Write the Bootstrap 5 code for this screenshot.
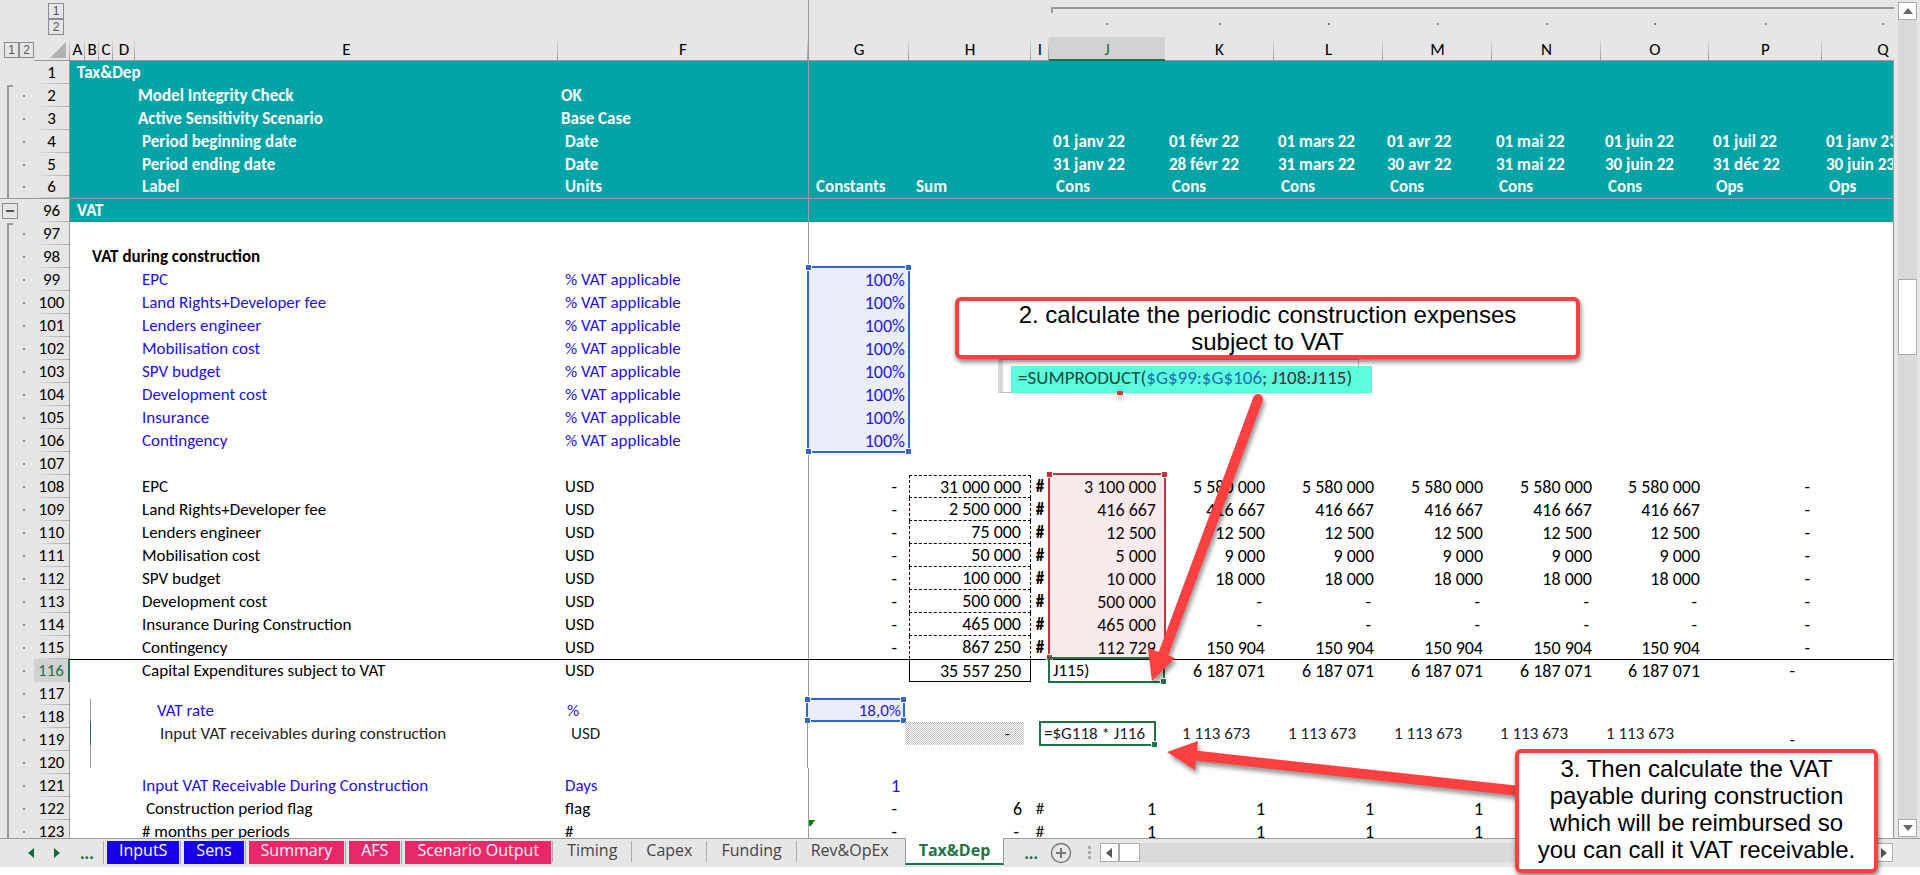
<!DOCTYPE html>
<html lang="en">
<head>
<meta charset="utf-8">
<meta name="viewport" content="width=device-width, initial-scale=1">
<title>Tax&amp;Dep</title>
<link href="https://cdn.jsdelivr.net/npm/bootstrap@5.3.0/dist/css/bootstrap.min.css" rel="stylesheet">
<style>
  :root { --chrome:#e6e6e6; --rule:#9b9b9b; --teal:#00a3a6; --xl:#217346; --entry:#1f0fe0; --alert:#ff4040; --pick:#3366cc; --pickred:#c0343f; }
  body { font-family: Calibri, Carlito, Lato, sans-serif; font-size: 17px; line-height: 20px; color: #000; background: #fff; }
  .app { padding-bottom: 8px; }
  .app button { border-radius: 0; padding: 0; line-height: 1; }

  /* grid */
  .sheet { background: #fff; min-width: 0; }
  .sheet::after { content: ""; position: absolute; right: 0; top: 60px; bottom: 0; border-right: 1px solid var(--rule); }
  .cells { table-layout: fixed; width: 1944px; border-collapse: separate; border-spacing: 0; white-space: nowrap; }
  .cells td, .cells th { height: 23px; padding: 0 9px 0 7px; vertical-align: middle; }
  .cells th { font-weight: 400; }
  col.c-gut { width: 34px; } col.c-num { width: 36px; } col.c-a { width: 15px; } col.c-b { width: 14px; } col.c-d { width: 22px; }
  col.c-e { width: 423px; } col.c-f { width: 251px; } col.c-g { width: 100px; } col.c-h { width: 122px; } col.c-i { width: 18px; }
  col.c-j { width: 116px; } col.c-k { width: 109px; } col.c-o { width: 108px; } col.c-p { width: 113px; } col.c-q { width: 122px; }

  .cells thead { background: var(--chrome); }
  .cells thead .levels th { height: 37px; padding: 0; }
  .cells thead .levels th.in { background: linear-gradient(var(--rule),var(--rule)) 0 7px/100% 2px no-repeat, linear-gradient(#888,#888) center 23px/2px 2px no-repeat; }
  .cells thead .levels th.first { background: linear-gradient(var(--rule),var(--rule)) 2px 7px/100% 2px no-repeat, linear-gradient(var(--rule),var(--rule)) 2px 7px/2px 6px no-repeat, linear-gradient(#888,#888) center 23px/2px 2px no-repeat; }
  .cells thead .letters th { height: 24px; padding: 3px 0 0; line-height: 18px; text-align: center; border-bottom: 1px solid var(--rule); background: linear-gradient(#e6e6e6,#999) right 0 top 0/1px 100% no-repeat; }
  .cells thead .letters th.plain { background: none; border-bottom-color: var(--chrome); }
  .cells thead .letters th.on { background: #d2d2d2; color: var(--xl); border-bottom: 2px solid var(--xl); }
  .lvl { width: 16px; height: 16px; border: 1px solid #8a8a98; background: transparent; color: #555; font-family: "Liberation Sans", sans-serif; font-size: 12px; display: block; }

  .cells tbody td.gut { padding: 0 0 0 2px; background-color: var(--chrome); background-repeat: no-repeat; }
  .cells tbody td.br { background-image: linear-gradient(var(--rule),var(--rule)), linear-gradient(#888,#888); background-position: 7px 0, 23px center; background-size: 2px 100%, 2px 2px; }
  .cells tbody td.br.start { background-image: linear-gradient(var(--rule),var(--rule)), linear-gradient(var(--rule),var(--rule)), linear-gradient(#888,#888); background-position: 7px 1px, 7px 1px, 23px center; background-size: 2px 100%, 6px 2px, 2px 2px; }
  .cells tbody th { padding: 0; text-align: center; background: linear-gradient(90deg,#e6e6e6,#aaa) left bottom/100% 1px no-repeat var(--chrome); border-right: 1px solid var(--rule); }
  .cells tbody th.on { background: #d2d2d2; color: var(--xl); border-right: 2px solid var(--xl); }
  .cells td.f { border-right: 1px solid var(--rule); }
  .cells thead th.fz { border-right: 1px solid var(--rule); }
  .cells tr.head td { color: #fff; font-weight: 700; }
  .cells tr.head td:not(.gut) { background: var(--teal); }
  .cells tr.cut > * { border-bottom: 1px solid var(--rule); }
  .cells td.t3 { padding-left: 3px; }
  .cells td.t11 { padding-left: 11px; }
  .cells td.t4 { padding-left: 4px; }
  .num td:nth-child(n+6) { text-align: right; font-size: 18px; }
  .num td:nth-child(n+6).txt { text-align: left; font-size: 17px; }
  .cells td.pct { padding-right: 4px; }
  .cells td.dash { padding-right: 12px; }
  .cells td.dash27 { padding-right: 27px; }
  .cells td.hash { padding: 0; text-align: center !important; font-size: 17px !important; }
  .boxed td.hash { font-weight: 700; }
  .entry td { color: var(--entry); }
  .cells td.box { border: 1px dashed #000; border-top: 0; }
  .cells tr:not(.boxed) + tr.boxed td.box { border-top: 1px dashed #000; }
  .cells td.total { border: 1px solid #000; }
  .cells td.last { border-bottom-color: transparent; }
  .cells tr.sum td:not(.gut) { border-top: 1px solid #000; }
  .cells td.flag { background: linear-gradient(to bottom right, #0a7d0a 50%, transparent 50%) 0 0/7px 7px no-repeat; }

  /* range outlines that lie over the cells */
  .range { position: absolute; border: 2px solid; pointer-events: none; }
  .range i { position: absolute; border: 1px solid #fff; background: currentColor; box-sizing: content-box; width: 5px; height: 5px; }
  .range .nw { left: -4px; top: -4px; } .range .ne { right: -4px; top: -4px; } .range .sw { left: -4px; bottom: -4px; } .range .se { right: -4px; bottom: -4px; }
  .r-blue { color: var(--pick); background: rgba(51,102,204,.11); }
  .r-red { color: var(--pickred); background: rgba(200,50,60,.10); }
  .r-green { color: var(--xl); }
  .r-pct { left: 807px; top: 266px; width: 103px; height: 187px; }
  .r-capex { left: 1048px; top: 473px; width: 118px; height: 186px; }
  .r-active { left: 1048px; top: 657px; width: 117px; height: 26px; }

  /* pasted strip with the VAT lines */
  .strip { position: absolute; left: 90px; top: 699px; background: #fff; }
  .strip table { table-layout: fixed; width: 1593px; border-collapse: separate; border-spacing: 0; white-space: nowrap; color: #222; }
  .strip td { height: 23px; padding: 0 9px 0 0; text-align: right; position: relative; }
  .strip td.nm { text-align: left; padding-left: 66px; border-left: 1px solid var(--rule); }
  .strip tr.calc td.nm { padding-left: 69px; border-left-color: var(--xl); }
  .strip td.un { text-align: left; padding-left: 4px; border-right: 1px solid var(--rule); }
  .strip tr.calc td.un { padding-left: 8px; }
  .strip td.hatch { background: repeating-conic-gradient(#c2c2c2 0 25%, #fff 0 50%) 0 0/2px 2px; padding-right: 14px; }
  .strip td.edit { text-align: left; padding-left: 4px; }
  .strip .range { inset: -1px -1px -1px -1px; }
  .strip .rate { padding-right: 4px; }
  .strip .r-rate { inset: -1px 0 0 -2px; }

  /* notes */
  .note { position: absolute; border: 4px solid var(--alert); border-radius: 6px; background: #fff; text-align: center; font-family: "Liberation Sans", Arial, sans-serif; font-size: 24px; line-height: 27px; box-shadow: 1px 3px 5px rgba(0,0,0,.5); }
  .n-two { left: 955px; top: 297px; width: 625px; height: 62px; }
  .n-three { left: 1515px; top: 749px; width: 363px; height: 124px; padding-top: 2px; }
  .formula { position: absolute; left: 998px; top: 359px; width: 361px; height: 34px; border: 1px solid #bbb; border-left: 5px solid #d8d8d8; padding: 6px 0 0 8px; background: #fff; }
  .formula span { display: block; width: 361px; height: 27px; padding-left: 7px; background: #5bffdd; font-size: 19px; line-height: 24px; white-space: nowrap; color: #14483c; }
  .formula b { font-weight: 400; color: #1c6fb4; } .formula em { font-style: normal; color: #4a2a30; }
  .speck { position: absolute; left: 1117px; top: 391px; width: 6px; height: 4px; background: #d23a3a; box-shadow: 0 4px 4px rgba(0,0,0,.3); }
  .arrows { position: absolute; left: 0; top: 0; width: 1600px; height: 838px; pointer-events: none; filter: drop-shadow(2px 4px 2px rgba(0,0,0,.4)); }

  /* scroll bars */
  .vbar { width: 26px; background: var(--chrome); padding: 2px 3px 1px 4px; }
  .sq { border: 1px solid #ababab; background: #fff; display: flex; align-items: center; justify-content: center; }
  .vbar .sq { height: 18px; }
  .vtrack { background: #dadada; }
  .vthumb { height: 76px; margin-top: 259px; border: 1px solid #ababab; background: #fff; }

  /* sheet tabs */
  .tabbar { height: 29px; background: var(--chrome); border-top: 1px solid var(--rule); font-family: "Open Sans", "Noto Sans", sans-serif; font-size: 16px; line-height: 20px; }
  .tabbar a { color: #444; text-decoration: none; display: block; white-space: nowrap; }
  .tabbar .plain { padding: 0 14px; border-left: 1px solid #aaa; height: 21px; margin-top: 2px; }
  .tabbar .tinted { padding-left: 3px; border-left: 1px solid #aaa; height: 23px; margin: 2px 1px 0 0; }
  .tabbar .tinted a { color: #fff; padding: 0 12px; height: 23px; line-height: 18px; }
  .tabbar .bl a { background: #1700e8; } .tabbar .pk a { background: #e8286b; }
  .tabbar .plain a { line-height: 18px; }
  .tabbar .cur { background: #fff; border: 1px solid var(--rule); border-top: 0; border-bottom: 2px solid var(--xl); margin: -1px 0 0 2px; height: 27px; padding: 2px 13px 0; }
  .tabbar .cur a { color: var(--xl); font-weight: 700; }
  .tabnav { width: 103px; padding-left: 28px; gap: 20px; }
  .tabbar button { background: none; border: 0; }
  .dots3 { color: var(--xl); font-weight: 700; }
  .hbar { height: 19px; margin: 4px 27px 0 0; }
  .hbar .sq { width: 19px; height: 19px; border: 1px solid #ababab; background: #fff; }
  .hbar .htr { background: #dadada; } .hbar .hth { width: 21px; height: 19px; background: #fff; border: 1px solid #ababab; }
</style>
</head>
<body>
<div class="app vh-100 d-flex flex-column position-relative overflow-hidden">
  <div class="d-flex flex-grow-1 overflow-hidden">
    <main class="sheet flex-grow-1 position-relative overflow-hidden">
      <table class="cells">
        <colgroup><col class="c-gut"><col class="c-num"><col class="c-a"><col class="c-b"><col class="c-b"><col class="c-d"><col class="c-e"><col class="c-f"><col class="c-g"><col class="c-h"><col class="c-i"><col class="c-j"><col class="c-k"><col class="c-k"><col class="c-k"><col class="c-k"><col class="c-o"><col class="c-p"><col class="c-q"></colgroup>
        <thead>
          <tr class="levels"><th></th><th><div class="d-flex flex-column align-items-center ps-2"><button class="lvl">1</button><button class="lvl">2</button></div></th><th colspan="5"></th><th class="fz"></th><th colspan="3"></th><th class="in first"></th><th class="in"></th><th class="in"></th><th class="in"></th><th class="in"></th><th class="in"></th><th class="in"></th><th class="in"></th></tr>
          <tr class="letters"><th class="plain"><div class="d-flex ps-1"><button class="lvl">1</button><button class="lvl">2</button></div></th><th><svg width="16" height="16" viewBox="0 0 16 16" class="d-block ms-auto me-1"><path d="M16 0V16H0Z" fill="#b2b2b2"/></svg></th><th>A</th><th>B</th><th>C</th><th>D</th><th>E</th><th class="fz">F</th><th>G</th><th>H</th><th>I</th><th class="on">J</th><th>K</th><th>L</th><th>M</th><th>N</th><th>O</th><th>P</th><th>Q</th></tr>
        </thead>
        <tbody>
          <tr class="head"><td class="gut"></td><th scope="row">1</th><td colspan="5">Tax&amp;Dep</td><td class="f"></td><td colspan="11"></td></tr>
          <tr class="head"><td class="gut br start"></td><th scope="row">2</th><td colspan="4"></td><td class="t3">Model Integrity Check</td><td class="f t3">OK</td><td colspan="11"></td></tr>
          <tr class="head"><td class="gut br"></td><th scope="row">3</th><td colspan="4"></td><td class="t3">Active Sensitivity Scenario</td><td class="f t3">Base Case</td><td colspan="11"></td></tr>
          <tr class="head"><td class="gut br"></td><th scope="row">4</th><td colspan="4"></td><td>Period beginning date</td><td class="f">Date</td><td colspan="3"></td><td class="t4">01 janv 22</td><td class="t4">01 févr 22</td><td class="t4">01 mars 22</td><td class="t4">01 avr 22</td><td class="t4">01 mai 22</td><td class="t4">01 juin 22</td><td class="t4">01 juil 22</td><td class="t4">01 janv 23</td></tr>
          <tr class="head"><td class="gut br"></td><th scope="row">5</th><td colspan="4"></td><td>Period ending date</td><td class="f">Date</td><td colspan="3"></td><td class="t4">31 janv 22</td><td class="t4">28 févr 22</td><td class="t4">31 mars 22</td><td class="t4">30 avr 22</td><td class="t4">31 mai 22</td><td class="t4">30 juin 22</td><td class="t4">31 déc 22</td><td class="t4">30 juin 23</td></tr>
          <tr class="head cut"><td class="gut br"></td><th scope="row">6</th><td colspan="4"></td><td>Label</td><td class="f">Units</td><td>Constants</td><td>Sum</td><td></td><td>Cons</td><td>Cons</td><td>Cons</td><td>Cons</td><td>Cons</td><td>Cons</td><td>Ops</td><td>Ops</td></tr>
          <tr class="head"><td class="gut"><button class="lvl" aria-label="Collapse"><svg width="14" height="14" viewBox="0 0 14 14" class="d-block"><path d="M3 7H11" stroke="#555" stroke-width="2"/></svg></button></td><th scope="row">96</th><td colspan="5">VAT</td><td class="f"></td><td colspan="11"></td></tr>
          <tr><td class="gut br start"></td><th scope="row">97</th><td colspan="5"></td><td class="f"></td></tr>
          <tr><td class="gut br"></td><th scope="row">98</th><td></td><td colspan="4" class="fw-bold">VAT during construction</td><td class="f"></td></tr>
          <tr class="entry num"><td class="gut br"></td><th scope="row">99</th><td colspan="4"></td><td>EPC</td><td class="f">% VAT applicable</td><td class="pct">100%</td></tr>
          <tr class="entry num"><td class="gut br"></td><th scope="row">100</th><td colspan="4"></td><td>Land Rights+Developer fee</td><td class="f">% VAT applicable</td><td class="pct">100%</td></tr>
          <tr class="entry num"><td class="gut br"></td><th scope="row">101</th><td colspan="4"></td><td>Lenders engineer</td><td class="f">% VAT applicable</td><td class="pct">100%</td></tr>
          <tr class="entry num"><td class="gut br"></td><th scope="row">102</th><td colspan="4"></td><td>Mobilisation cost</td><td class="f">% VAT applicable</td><td class="pct">100%</td></tr>
          <tr class="entry num"><td class="gut br"></td><th scope="row">103</th><td colspan="4"></td><td>SPV budget</td><td class="f">% VAT applicable</td><td class="pct">100%</td></tr>
          <tr class="entry num"><td class="gut br"></td><th scope="row">104</th><td colspan="4"></td><td>Development cost</td><td class="f">% VAT applicable</td><td class="pct">100%</td></tr>
          <tr class="entry num"><td class="gut br"></td><th scope="row">105</th><td colspan="4"></td><td>Insurance</td><td class="f">% VAT applicable</td><td class="pct">100%</td></tr>
          <tr class="entry num"><td class="gut br"></td><th scope="row">106</th><td colspan="4"></td><td>Contingency</td><td class="f">% VAT applicable</td><td class="pct">100%</td></tr>
          <tr><td class="gut br"></td><th scope="row">107</th><td colspan="5"></td><td class="f"></td></tr>
          <tr class="num boxed"><td class="gut br"></td><th scope="row">108</th><td colspan="4"></td><td>EPC</td><td class="f">USD</td><td class="dash">-</td><td class="box">31 000 000</td><td class="hash">#</td><td>3 100 000</td><td>5 580 000</td><td>5 580 000</td><td>5 580 000</td><td>5 580 000</td><td>5 580 000</td><td class="dash">-</td></tr>
          <tr class="num boxed"><td class="gut br"></td><th scope="row">109</th><td colspan="4"></td><td>Land Rights+Developer fee</td><td class="f">USD</td><td class="dash">-</td><td class="box">2 500 000</td><td class="hash">#</td><td>416 667</td><td>416 667</td><td>416 667</td><td>416 667</td><td>416 667</td><td>416 667</td><td class="dash">-</td></tr>
          <tr class="num boxed"><td class="gut br"></td><th scope="row">110</th><td colspan="4"></td><td>Lenders engineer</td><td class="f">USD</td><td class="dash">-</td><td class="box">75 000</td><td class="hash">#</td><td>12 500</td><td>12 500</td><td>12 500</td><td>12 500</td><td>12 500</td><td>12 500</td><td class="dash">-</td></tr>
          <tr class="num boxed"><td class="gut br"></td><th scope="row">111</th><td colspan="4"></td><td>Mobilisation cost</td><td class="f">USD</td><td class="dash">-</td><td class="box">50 000</td><td class="hash">#</td><td>5 000</td><td>9 000</td><td>9 000</td><td>9 000</td><td>9 000</td><td>9 000</td><td class="dash">-</td></tr>
          <tr class="num boxed"><td class="gut br"></td><th scope="row">112</th><td colspan="4"></td><td>SPV budget</td><td class="f">USD</td><td class="dash">-</td><td class="box">100 000</td><td class="hash">#</td><td>10 000</td><td>18 000</td><td>18 000</td><td>18 000</td><td>18 000</td><td>18 000</td><td class="dash">-</td></tr>
          <tr class="num boxed"><td class="gut br"></td><th scope="row">113</th><td colspan="4"></td><td>Development cost</td><td class="f">USD</td><td class="dash">-</td><td class="box">500 000</td><td class="hash">#</td><td>500 000</td><td class="dash">-</td><td class="dash">-</td><td class="dash">-</td><td class="dash">-</td><td class="dash">-</td><td class="dash">-</td></tr>
          <tr class="num boxed"><td class="gut br"></td><th scope="row">114</th><td colspan="4"></td><td>Insurance During Construction</td><td class="f">USD</td><td class="dash">-</td><td class="box">465 000</td><td class="hash">#</td><td>465 000</td><td class="dash">-</td><td class="dash">-</td><td class="dash">-</td><td class="dash">-</td><td class="dash">-</td><td class="dash">-</td></tr>
          <tr class="num boxed"><td class="gut br"></td><th scope="row">115</th><td colspan="4"></td><td>Contingency</td><td class="f">USD</td><td class="dash">-</td><td class="box last">867 250</td><td class="hash">#</td><td>112 729</td><td>150 904</td><td>150 904</td><td>150 904</td><td>150 904</td><td>150 904</td><td class="dash">-</td></tr>
          <tr class="num sum"><td class="gut br"></td><th scope="row" class="on">116</th><td colspan="4"></td><td>Capital Expenditures subject to VAT</td><td class="f">USD</td><td></td><td class="total">35 557 250</td><td></td><td class="txt t4">J115)</td><td>6 187 071</td><td>6 187 071</td><td>6 187 071</td><td>6 187 071</td><td>6 187 071</td><td class="dash27">-</td><td></td></tr>
          <tr><td class="gut br"></td><th scope="row">117</th><td colspan="5"></td><td class="f"></td></tr>
          <tr><td class="gut br"></td><th scope="row">118</th><td colspan="5"></td><td class="f"></td></tr>
          <tr><td class="gut br"></td><th scope="row">119</th><td colspan="5"></td><td class="f"></td><td colspan="9"></td><td class="dash27 text-end">-</td></tr>
          <tr><td class="gut br"></td><th scope="row">120</th><td colspan="5"></td><td class="f"></td></tr>
          <tr class="entry num"><td class="gut br"></td><th scope="row">121</th><td colspan="4"></td><td>Input VAT Receivable During Construction</td><td class="f">Days</td><td>1</td></tr>
          <tr class="num"><td class="gut br"></td><th scope="row">122</th><td colspan="4"></td><td class="t11">Construction period flag</td><td class="f">flag</td><td class="dash">-</td><td>6</td><td class="hash">#</td><td>1</td><td>1</td><td>1</td><td>1</td></tr>
          <tr class="num"><td class="gut br"></td><th scope="row">123</th><td colspan="4"></td><td># months per periods</td><td class="f">#</td><td class="dash flag">-</td><td class="dash">-</td><td class="hash">#</td><td>1</td><td>1</td><td>1</td><td>1</td></tr>
        </tbody>
      </table>

      <div class="strip">
        <table>
          <colgroup><col style="width:473px"><col style="width:245px"><col style="width:97px"><col style="width:119px"><col style="width:16px"><col style="width:115px"><col style="width:104px"><col style="width:106px"><col style="width:106px"><col style="width:106px"><col style="width:106px"></colgroup>
          <tr class="entry"><td class="nm">VAT rate</td><td class="un">%</td><td class="rate">18,0%<div class="range r-blue r-rate"><i class="nw"></i><i class="ne"></i><i class="sw"></i><i class="se"></i></div></td><td colspan="8"></td></tr>
          <tr class="calc"><td class="nm">Input VAT receivables during construction</td><td class="un">USD</td><td></td><td class="hatch">-</td><td></td><td class="edit">=$G118 * J116<div class="range r-green"><i class="se"></i></div></td><td>1 113 673</td><td>1 113 673</td><td>1 113 673</td><td>1 113 673</td><td>1 113 673</td></tr>
          <tr><td class="nm"></td><td class="un"></td><td colspan="9"></td></tr>
        </table>
      </div>

      <div class="range r-blue r-pct"><i class="nw"></i><i class="ne"></i><i class="sw"></i><i class="se"></i></div>
      <div class="range r-red r-capex"><i class="nw"></i><i class="ne"></i><i class="sw"></i></div>
      <div class="range r-green r-active"><i class="se"></i></div>

      <div class="formula"><span>=SUMPRODUCT(<b>$G$99:$G$106</b>; <em>J108:J115</em>)</span></div>
      <div class="speck"></div>
      <svg class="arrows" viewBox="0 0 1600 838" fill="#ff4040" stroke="#ff4040">
        <path d="M1258 399L1163 655" stroke-width="10" stroke-linecap="round"/><path d="M1152 681L1148 648L1175 658Z" stroke="none"/>
        <path d="M1190 755L1520 791" stroke-width="10"/><path d="M1167 752L1198 741L1195 770Z" stroke="none"/>
      </svg>
    </main>
    <div class="vbar flex-shrink-0 d-flex flex-column">
      <button class="sq" aria-label="Scroll up"><svg width="10" height="6" viewBox="0 0 10 6"><path d="M0 6L5 0L10 6Z" fill="#666"/></svg></button>
      <div class="vtrack flex-grow-1"><div class="vthumb"></div></div>
      <button class="sq" aria-label="Scroll down"><svg width="10" height="6" viewBox="0 0 10 6"><path d="M0 0L5 6L10 0Z" fill="#666"/></svg></button>
    </div>
  </div>

  <nav class="tabbar d-flex flex-shrink-0">
    <div class="tabnav d-flex align-items-center flex-shrink-0">
      <button aria-label="Previous sheet"><svg width="6" height="10" viewBox="0 0 6 10" class="d-block"><path d="M6 0L0 5L6 10Z" fill="#0a6b3a"/></svg></button>
      <button aria-label="Next sheet"><svg width="6" height="10" viewBox="0 0 6 10" class="d-block"><path d="M0 0L6 5L0 10Z" fill="#0a6b3a"/></svg></button>
      <span class="dots3">...</span>
    </div>
    <div class="tinted bl"><a href="#">InputS</a></div>
    <div class="tinted bl"><a href="#">Sens</a></div>
    <div class="tinted pk"><a href="#">Summary</a></div>
    <div class="tinted pk"><a href="#">AFS</a></div>
    <div class="tinted pk"><a href="#">Scenario Output</a></div>
    <div class="plain"><a href="#">Timing</a></div>
    <div class="plain"><a href="#">Capex</a></div>
    <div class="plain"><a href="#">Funding</a></div>
    <div class="plain"><a href="#">Rev&amp;OpEx</a></div>
    <div class="cur"><a href="#" aria-current="page">Tax&amp;Dep</a></div>
    <div class="d-flex align-items-center flex-shrink-0 ps-3 gap-2"><span class="dots3 ms-1">...</span>
      <button class="ms-1" aria-label="New sheet"><svg width="22" height="22" viewBox="0 0 22 22" class="d-block" fill="none" stroke="#777"><circle cx="11" cy="11" r="9.5" stroke-width="1.4"/><path d="M11 6V16M6 11H16" stroke-width="2"/></svg></button>
      <svg width="4" height="16" viewBox="0 0 4 16" class="ms-2 me-2"><path d="M0 1H3V4H0ZM0 6H3V9H0ZM0 11H3V14H0Z" fill="#aaa"/></svg>
    </div>
    <div class="hbar d-flex flex-grow-1">
      <button class="sq" aria-label="Scroll left"><svg width="6" height="10" viewBox="0 0 6 10"><path d="M6 0L0 5L6 10Z" fill="#555"/></svg></button>
      <div class="htr flex-grow-1"><div class="hth"></div></div>
      <button class="sq" aria-label="Scroll right"><svg width="6" height="10" viewBox="0 0 6 10"><path d="M0 0L6 5L0 10Z" fill="#555"/></svg></button>
    </div>
  </nav>

  <div class="note n-two">2. calculate the periodic construction expenses<br>subject to VAT</div>
  <div class="note n-three">3. Then calculate the VAT<br>payable during construction<br>which will be reimbursed so<br>you can call it VAT receivable.</div>
</div>
<script src="https://cdn.jsdelivr.net/npm/bootstrap@5.3.0/dist/js/bootstrap.bundle.min.js"></script>
</body>
</html>
